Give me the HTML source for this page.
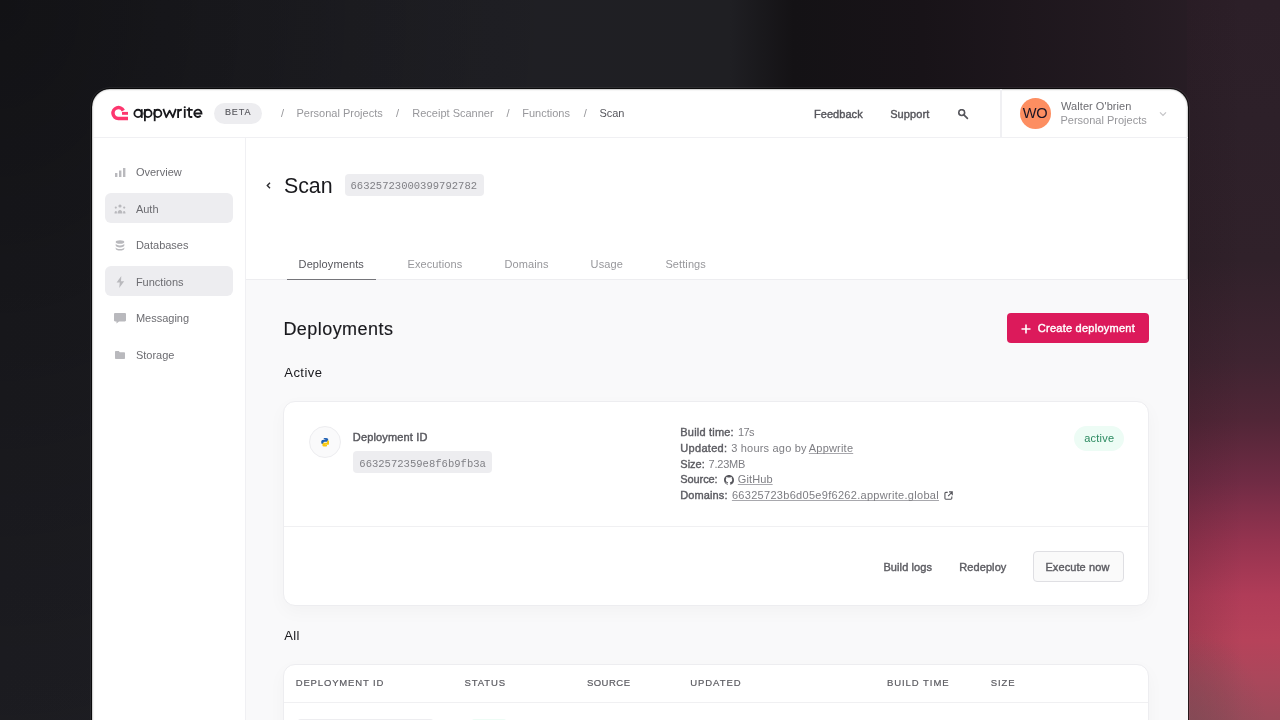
<!DOCTYPE html>
<html><head><meta charset="utf-8">
<style>
*{box-sizing:border-box;margin:0;padding:0}
html,body{width:1280px;height:720px;overflow:hidden}
body{font-family:"Liberation Sans",sans-serif;background:#1b1b1f;position:relative}
#bg{position:absolute;inset:0;background:
radial-gradient(ellipse 560px 760px at 0px 0px, rgba(0,0,0,.36) 0%, rgba(0,0,0,.12) 60%, rgba(0,0,0,0) 100%),
linear-gradient(90deg,#1c1c21 0%,#1f1f24 40%,#1f1f23 57%,#141215 62%,#181318 72%,#231a21 88%,#2d2029 100%)}
#rs{position:absolute;left:1187px;top:0;width:93px;height:720px;background:
radial-gradient(ellipse 80px 100px at 0px 730px, rgba(128,78,88,.7) 0%, rgba(128,78,88,0) 100%),
linear-gradient(90deg, rgba(20,10,15,.12) 0%, rgba(20,10,15,0) 60%),
linear-gradient(180deg,#2c1f28 0px,#2d2029 120px,#30212a 260px,#3f2431 360px,#512637 420px,#6f2b44 480px,#94334f 540px,#b03c58 595px,#b6425a 640px,#aa475b 680px,#9c4a5a 720px)}
.abs{position:absolute}
#win{position:absolute;left:91.4px;top:88px;width:1097.8px;height:700px;background:#fff;border-radius:19px;border:1.7px solid rgba(0,0,0,.72);background-clip:padding-box;box-shadow:0 0 0 1px rgba(255,255,255,.06),inset 0 0 1.5px 0.5px rgba(0,0,0,.35)}
#clip{position:absolute;left:0;top:0;width:1280px;height:720px;will-change:transform;clip-path:inset(89px 92px 0 93px round 18px 18px 0 0)}
.t{position:absolute;white-space:nowrap;line-height:1}
u{text-decoration:underline;text-underline-offset:1.5px;text-decoration-thickness:1px}
</style></head><body>
<div id="bg"></div><div id="rs"></div>
<div id="win"></div>
<div id="clip">
<div class="abs" style="left:93px;top:137.2px;width:1095px;height:1.2px;background:#f0f0f3"></div>
<svg class="abs" style="left:108px;top:102px" width="22" height="20" viewBox="0 0 22 20">
<path d="M15.3 8.6A5.45 5.45 0 1 0 10.3 16.5H20" fill="none" stroke="#fd366e" stroke-width="3.5"/>
<rect x="14" y="9.9" width="6" height="2.9" fill="#fd366e"/></svg>
<svg class="abs" style="left:131px;top:102px" width="74" height="22" viewBox="0 0 74 22" fill="none" stroke="#19191d" stroke-width="1.8">
<circle cx="7.0" cy="11.4" r="3.65"/><path d="M10.75 7.2V15.9"/>
<path d="M13.9 7.0V19.2"/><circle cx="16.95" cy="11.4" r="3.65"/>
<path d="M23.7 7.0V19.2"/><circle cx="26.75" cy="11.4" r="3.65"/>
<path d="M32.3 6.9L35.3 15.2 38.6 8.6 41.9 15.2 44.9 6.9" stroke-linejoin="round"/>
<path d="M47.1 15.9V7M47.1 10.8C47.1 8.6 48.6 7.75 50.9 7.75"/>
<path d="M53.75 7V15.9"/><circle cx="53.75" cy="5.3" r="1.05" fill="#19191d" stroke="none"/>
<path d="M58.1 5.6V13.6Q58.1 15.0 59.5 15.0H61.3M55.6 7.8H61.7"/>
<path d="M63.2 11.5H70.55A3.65 3.65 0 1 0 69.7 13.7"/>
</svg>
<div class="abs" style="left:214px;top:103px;width:48px;height:21px;background:#ededf0;border-radius:11px"></div>
<div class="t" style="left:225.00px;top:108.38px;font-size:9px;color:#56565c;font-weight:400;letter-spacing:0.85px;font-family:'Liberation Sans',sans-serif;-webkit-text-stroke:0.15px #56565c;">BETA</div>
<div class="t" style="left:281.00px;top:107.69px;font-size:11px;color:#97979b;font-weight:400;letter-spacing:0px;font-family:'Liberation Sans',sans-serif;">/</div>
<div class="t" style="left:296.50px;top:107.69px;font-size:11px;color:#97979b;font-weight:400;letter-spacing:0px;font-family:'Liberation Sans',sans-serif;">Personal Projects</div>
<div class="t" style="left:396.00px;top:107.69px;font-size:11px;color:#97979b;font-weight:400;letter-spacing:0px;font-family:'Liberation Sans',sans-serif;">/</div>
<div class="t" style="left:412.30px;top:107.69px;font-size:11px;color:#97979b;font-weight:400;letter-spacing:0px;font-family:'Liberation Sans',sans-serif;">Receipt Scanner</div>
<div class="t" style="left:506.50px;top:107.69px;font-size:11px;color:#97979b;font-weight:400;letter-spacing:0px;font-family:'Liberation Sans',sans-serif;">/</div>
<div class="t" style="left:522.20px;top:107.69px;font-size:11px;color:#97979b;font-weight:400;letter-spacing:0px;font-family:'Liberation Sans',sans-serif;">Functions</div>
<div class="t" style="left:583.70px;top:107.69px;font-size:11px;color:#97979b;font-weight:400;letter-spacing:0px;font-family:'Liberation Sans',sans-serif;">/</div>
<div class="t" style="left:599.40px;top:107.69px;font-size:11px;color:#56565c;font-weight:400;letter-spacing:0px;font-family:'Liberation Sans',sans-serif;">Scan</div>
<div class="t" style="left:814.00px;top:108.89px;font-size:11px;color:#56565c;font-weight:400;letter-spacing:0.05px;font-family:'Liberation Sans',sans-serif;-webkit-text-stroke:0.4px #56565c;">Feedback</div>
<div class="t" style="left:890.20px;top:108.89px;font-size:11px;color:#56565c;font-weight:400;letter-spacing:0.1px;font-family:'Liberation Sans',sans-serif;-webkit-text-stroke:0.4px #56565c;">Support</div>
<svg class="abs" style="left:957px;top:109px" width="13" height="12" viewBox="0 0 13 12">
<circle cx="4.7" cy="3.6" r="2.95" fill="none" stroke="#56565c" stroke-width="1.6"/>
<path d="M6.9 5.8L10.4 9.3" stroke="#56565c" stroke-width="1.7" stroke-linecap="round"/></svg>
<div class="abs" style="left:1000.4px;top:89px;width:1.2px;height:48px;background:#f0f0f3"></div>
<div class="abs" style="left:1020px;top:98px;width:31px;height:31px;background:#fd8e61;border-radius:50%"></div>
<div class="t" style="left:1022.80px;top:106.04px;font-size:14.6px;color:#1b1424;font-weight:400;letter-spacing:-0.3px;font-family:'Liberation Sans',sans-serif;">WO</div>
<div class="t" style="left:1061.10px;top:101.49px;font-size:11px;color:#6c6c71;font-weight:400;letter-spacing:0.05px;font-family:'Liberation Sans',sans-serif;">Walter O&#39;brien</div>
<div class="t" style="left:1060.50px;top:114.59px;font-size:11px;color:#97979b;font-weight:400;letter-spacing:0px;font-family:'Liberation Sans',sans-serif;">Personal Projects</div>
<svg class="abs" style="left:1159px;top:111px" width="8" height="6" viewBox="0 0 8 6">
<path d="M1 1.3l3 3 3-3" fill="none" stroke="#c3c3c6" stroke-width="1.2"/></svg>
<div class="abs" style="left:245px;top:138px;width:1.2px;height:600px;background:#f0f0f3"></div>
<div class="abs" style="left:105px;top:193px;width:127.5px;height:30px;background:#ededf0;border-radius:6px"></div>
<div class="abs" style="left:105px;top:266px;width:127.5px;height:30px;background:#ededf0;border-radius:6px"></div>
<div class="t" style="left:135.90px;top:167.29px;font-size:11px;color:#6c6c71;font-weight:400;letter-spacing:0px;font-family:'Liberation Sans',sans-serif;">Overview</div>
<div class="t" style="left:135.90px;top:203.59px;font-size:11px;color:#6c6c71;font-weight:400;letter-spacing:0px;font-family:'Liberation Sans',sans-serif;">Auth</div>
<div class="t" style="left:135.90px;top:240.39px;font-size:11px;color:#6c6c71;font-weight:400;letter-spacing:0px;font-family:'Liberation Sans',sans-serif;">Databases</div>
<div class="t" style="left:135.90px;top:276.89px;font-size:11px;color:#6c6c71;font-weight:400;letter-spacing:0px;font-family:'Liberation Sans',sans-serif;">Functions</div>
<div class="t" style="left:135.90px;top:313.29px;font-size:11px;color:#6c6c71;font-weight:400;letter-spacing:0px;font-family:'Liberation Sans',sans-serif;">Messaging</div>
<div class="t" style="left:135.90px;top:349.89px;font-size:11px;color:#6c6c71;font-weight:400;letter-spacing:0px;font-family:'Liberation Sans',sans-serif;">Storage</div>
<svg class="abs" style="left:115px;top:167px" width="11" height="10" viewBox="0 0 11 10"><rect x="0" y="6" width="2.4" height="4" fill="#b9b9bd"/><rect x="4" y="3.5" width="2.4" height="6.5" fill="#b9b9bd"/><rect x="8" y="1" width="2.4" height="9" fill="#b9b9bd"/></svg>
<svg class="abs" style="left:114px;top:204px" width="12" height="10" viewBox="0 0 12 10"><circle cx="6" cy="2" r="1.6" fill="#b9b9bd"/><circle cx="1.8" cy="3.6" r="1.1" fill="#b9b9bd"/><circle cx="10.2" cy="3.6" r="1.1" fill="#b9b9bd"/><path d="M3.6 9.5c0-2 1-3.4 2.4-3.4s2.4 1.4 2.4 3.4z" fill="#b9b9bd"/><path d="M0.5 9.5c0-1.6.5-2.6 1.3-2.6s1.1.6 1.1 1.2v1.4z" fill="#b9b9bd"/><path d="M11.5 9.5c0-1.6-.5-2.6-1.3-2.6s-1.1.6-1.1 1.2v1.4z" fill="#b9b9bd"/></svg>
<svg class="abs" style="left:115px;top:240px" width="10" height="11" viewBox="0 0 10 11"><ellipse cx="5" cy="2" rx="4.3" ry="1.8" fill="#b9b9bd"/><path d="M0.7 3.6c0 1 1.9 1.8 4.3 1.8s4.3-.8 4.3-1.8v2c0 1-1.9 1.8-4.3 1.8S.7 6.6.7 5.6z" fill="#b9b9bd"/><path d="M0.7 7.2c0 1 1.9 1.8 4.3 1.8s4.3-.8 4.3-1.8v1.6c0 1-1.9 1.8-4.3 1.8S.7 9.8.7 8.8z" fill="#b9b9bd"/></svg>
<svg class="abs" style="left:116px;top:276px" width="9" height="12" viewBox="0 0 9 12"><path d="M5.3 0L0.6 6.6h3.2L3.2 12 8.2 5.2H5z" fill="#b9b9bd"/></svg>
<svg class="abs" style="left:114px;top:313px" width="12" height="11" viewBox="0 0 12 11"><path d="M1.2 0h9.6C11.5 0 12 .5 12 1.2v6c0 .7-.5 1.2-1.2 1.2H5L2.5 10.6V8.4H1.2C.5 8.4 0 7.9 0 7.2v-6C0 .5.5 0 1.2 0z" fill="#b9b9bd"/></svg>
<svg class="abs" style="left:115px;top:351px" width="10" height="8" viewBox="0 0 10 8"><path d="M0.8 0h3l1 1.2h4.4c.5 0 .8.3.8.8v5.2c0 .5-.3.8-.8.8H.8C.3 8 0 7.7 0 7.2V.8C0 .3.3 0 .8 0z" fill="#b9b9bd"/></svg>
<svg class="abs" style="left:266px;top:182px" width="5" height="7" viewBox="0 0 5 7"><path d="M4 0.8L1.3 3.5 4 6.2" fill="none" stroke="#2d2d31" stroke-width="1.4"/></svg>
<div class="t" style="left:283.90px;top:175.68px;font-size:21.4px;color:#19191d;font-weight:400;letter-spacing:0px;font-family:'Liberation Sans',sans-serif;">Scan</div>
<div class="abs" style="left:344.5px;top:174px;width:139.5px;height:22px;background:#ededf0;border-radius:4px"></div>
<div class="t" style="left:350.50px;top:181.21px;font-size:10.55px;color:#818186;font-weight:400;letter-spacing:0px;font-family:'Liberation Mono',monospace;">66325723000399792782</div>
<div class="t" style="left:298.60px;top:258.69px;font-size:11px;color:#56565c;font-weight:400;letter-spacing:0.1px;font-family:'Liberation Sans',sans-serif;">Deployments</div>
<div class="t" style="left:407.50px;top:258.69px;font-size:11px;color:#97979b;font-weight:400;letter-spacing:0.1px;font-family:'Liberation Sans',sans-serif;">Executions</div>
<div class="t" style="left:504.50px;top:258.69px;font-size:11px;color:#97979b;font-weight:400;letter-spacing:0.1px;font-family:'Liberation Sans',sans-serif;">Domains</div>
<div class="t" style="left:590.60px;top:258.69px;font-size:11px;color:#97979b;font-weight:400;letter-spacing:0.1px;font-family:'Liberation Sans',sans-serif;">Usage</div>
<div class="t" style="left:665.40px;top:258.69px;font-size:11px;color:#97979b;font-weight:400;letter-spacing:0.1px;font-family:'Liberation Sans',sans-serif;">Settings</div>
<div class="abs" style="left:246px;top:280px;width:942px;height:460px;background:#f9f9fa"></div>
<div class="abs" style="left:246px;top:279px;width:942px;height:1px;background:#ededf0"></div>
<div class="abs" style="left:287px;top:278.7px;width:89px;height:1.5px;background:#75757a"></div>
<div class="t" style="left:283.40px;top:319.66px;font-size:18px;color:#19191d;font-weight:400;letter-spacing:0.45px;font-family:'Liberation Sans',sans-serif;-webkit-text-stroke:0.15px #19191d;">Deployments</div>
<div class="t" style="left:284.30px;top:365.80px;font-size:13px;color:#19191d;font-weight:400;letter-spacing:0.45px;font-family:'Liberation Sans',sans-serif;">Active</div>
<div class="abs" style="left:1007px;top:313px;width:142px;height:30px;background:#dc1a5b;border-radius:4px"></div>
<svg class="abs" style="left:1021px;top:324px" width="10" height="10" viewBox="0 0 10 10"><path d="M5 0.5v9M0.5 5h9" stroke="#fff" stroke-width="1.6"/></svg>
<div class="t" style="left:1037.80px;top:323.49px;font-size:11px;color:#ffffff;font-weight:400;letter-spacing:0.25px;font-family:'Liberation Sans',sans-serif;-webkit-text-stroke:0.4px #ffffff;">Create deployment</div>
<div class="abs" style="left:283px;top:401px;width:866px;height:205px;background:#fff;border:1px solid #ededf0;border-radius:12px;box-shadow:0 6px 18px rgba(0,0,0,.03)"></div>
<div class="abs" style="left:284px;top:526px;width:864px;height:1px;background:#f0f0f2"></div>
<div class="abs" style="left:308.5px;top:426px;width:32px;height:32px;background:#fafafb;border:1px solid #ededf0;border-radius:50%"></div>
<svg class="abs" style="left:320.5px;top:438px" width="8.6" height="8.6" viewBox="0 0 9 9">
<path d="M4.4 0C2.6 0 2.7.8 2.7.8v.9h1.8v.3H1.9S.2 1.8.2 4.1s1.4 2.3 1.4 2.3h.9V5.3s0-1.4 1.4-1.4h2.3s1.3 0 1.3-1.3V1.3S7.7 0 4.4 0z" fill="#2262b4"/>
<path d="M4.6 9c1.8 0 1.7-.8 1.7-.8v-.9H4.5V7h2.6s1.7.2 1.7-2.1-1.4-2.3-1.4-2.3h-.9v1.1s0 1.4-1.4 1.4H2.8s-1.3 0-1.3 1.3v1.3S1.3 9 4.6 9z" fill="#f8c810"/></svg>
<div class="t" style="left:352.80px;top:432.29px;font-size:11px;color:#56565c;font-weight:400;letter-spacing:0.15px;font-family:'Liberation Sans',sans-serif;-webkit-text-stroke:0.4px #56565c;">Deployment ID</div>
<div class="abs" style="left:353px;top:451px;width:139px;height:22px;background:#ededf0;border-radius:4px"></div>
<div class="t" style="left:359.30px;top:458.51px;font-size:10.55px;color:#818186;font-weight:400;letter-spacing:0px;font-family:'Liberation Mono',monospace;">6632572359e8f6b9fb3a</div>
<div class="t" style="left:680.30px;top:427.49px;font-size:11px;color:#5c5c62;font-weight:400;letter-spacing:0.2px;font-family:'Liberation Sans',sans-serif;-webkit-text-stroke:0.4px #5c5c62;">Build time:</div>
<div class="t" style="left:680.30px;top:443.19px;font-size:11px;color:#5c5c62;font-weight:400;letter-spacing:0.3px;font-family:'Liberation Sans',sans-serif;-webkit-text-stroke:0.4px #5c5c62;">Updated:</div>
<div class="t" style="left:680.30px;top:458.69px;font-size:11px;color:#5c5c62;font-weight:400;letter-spacing:0.0px;font-family:'Liberation Sans',sans-serif;-webkit-text-stroke:0.4px #5c5c62;">Size:</div>
<div class="t" style="left:680.30px;top:474.49px;font-size:11px;color:#5c5c62;font-weight:400;letter-spacing:-0.1px;font-family:'Liberation Sans',sans-serif;-webkit-text-stroke:0.4px #5c5c62;">Source:</div>
<div class="t" style="left:680.30px;top:489.69px;font-size:11px;color:#5c5c62;font-weight:400;letter-spacing:0.1px;font-family:'Liberation Sans',sans-serif;-webkit-text-stroke:0.4px #5c5c62;">Domains:</div>
<div class="t" style="left:738.00px;top:427.49px;font-size:11px;color:#7d7d82;font-weight:400;letter-spacing:-0.6px;font-family:'Liberation Sans',sans-serif;">17s</div>
<div class="t" style="left:731.20px;top:443.19px;font-size:11px;color:#7d7d82;font-weight:400;letter-spacing:0.2px;font-family:'Liberation Sans',sans-serif;">3 hours ago by</div>
<div class="t" style="left:808.80px;top:443.19px;font-size:11px;color:#7d7d82;font-weight:400;letter-spacing:0.2px;font-family:'Liberation Sans',sans-serif;text-decoration:underline;text-decoration-color:#a8a8ad;text-underline-offset:0.9px;text-decoration-skip-ink:none;text-decoration-thickness:1px;">Appwrite</div>
<div class="t" style="left:708.50px;top:458.69px;font-size:11px;color:#7d7d82;font-weight:400;letter-spacing:-0.2px;font-family:'Liberation Sans',sans-serif;">7.23MB</div>
<div class="t" style="left:737.80px;top:474.49px;font-size:11px;color:#7d7d82;font-weight:400;letter-spacing:0.1px;font-family:'Liberation Sans',sans-serif;text-decoration:underline;text-decoration-color:#a8a8ad;text-underline-offset:0.9px;text-decoration-skip-ink:none;text-decoration-thickness:1px;">GitHub</div>
<div class="t" style="left:731.90px;top:489.69px;font-size:11px;color:#7d7d82;font-weight:400;letter-spacing:0.3px;font-family:'Liberation Sans',sans-serif;text-decoration:underline;text-decoration-color:#a8a8ad;text-underline-offset:0.9px;text-decoration-skip-ink:none;text-decoration-thickness:1px;">66325723b6d05e9f6262.appwrite.global</div>
<svg class="abs" style="left:724px;top:475px" width="10" height="10" viewBox="0 0 16 16"><path fill="#56565c" d="M8 0C3.58 0 0 3.58 0 8c0 3.54 2.29 6.53 5.47 7.59.4.07.55-.17.55-.38 0-.19-.01-.82-.01-1.49-2.01.37-2.53-.49-2.69-.94-.09-.23-.48-.94-.82-1.13-.28-.15-.68-.52-.01-.53.63-.01 1.08.58 1.23.82.72 1.21 1.87.87 2.33.66.07-.52.28-.87.51-1.07-1.78-.2-3.64-.89-3.64-3.95 0-.87.31-1.590.82-2.15-.08-.2-.36-1.02.08-2.12 0 0 .67-.21 2.2.82.64-.18 1.32-.27 2-.27.68 0 1.36.09 2 .27 1.53-1.04 2.2-.82 2.2-.82.44 1.1.16 1.92.08 2.12.51.56.82 1.27.82 2.15 0 3.07-1.87 3.75-3.65 3.95.29.25.54.73.54 1.48 0 1.07-.01 1.93-.01 2.2 0 .21.15.46.55.38A8.013 8.013 0 0016 8c0-4.42-3.58-8-8-8z"/></svg>
<svg class="abs" style="left:944.3px;top:491.3px" width="9.2" height="9.2" viewBox="0 0 10 10"><path d="M4 1.5H2A1 1 0 0 0 1 2.5v5.5a1 1 0 0 0 1 1h5.5a1 1 0 0 0 1-1V6" fill="none" stroke="#56565c" stroke-width="1.2"/><path d="M5.5 1h3.5v3.5M9 1L4.5 5.5" fill="none" stroke="#56565c" stroke-width="1.2"/></svg>
<div class="abs" style="left:1074px;top:426px;width:50px;height:25px;background:#edfcf5;border-radius:13px"></div>
<div class="t" style="left:1084.30px;top:432.89px;font-size:11px;color:#2b8a60;font-weight:400;letter-spacing:0.2px;font-family:'Liberation Sans',sans-serif;">active</div>
<div class="t" style="left:883.40px;top:561.89px;font-size:11px;color:#5c5c62;font-weight:400;letter-spacing:0.1px;font-family:'Liberation Sans',sans-serif;-webkit-text-stroke:0.4px #5c5c62;">Build logs</div>
<div class="t" style="left:959.20px;top:561.89px;font-size:11px;color:#5c5c62;font-weight:400;letter-spacing:0.1px;font-family:'Liberation Sans',sans-serif;-webkit-text-stroke:0.4px #5c5c62;">Redeploy</div>
<div class="abs" style="left:1032.5px;top:551px;width:91.5px;height:30.5px;background:#fafafa;border:1px solid #dfdfe3;border-radius:4px"></div>
<div class="t" style="left:1045.40px;top:562.09px;font-size:11px;color:#5c5c62;font-weight:400;letter-spacing:0.1px;font-family:'Liberation Sans',sans-serif;-webkit-text-stroke:0.4px #5c5c62;">Execute now</div>
<div class="t" style="left:284.30px;top:629.00px;font-size:13px;color:#19191d;font-weight:400;letter-spacing:0.3px;font-family:'Liberation Sans',sans-serif;">All</div>
<div class="abs" style="left:283px;top:664px;width:866px;height:100px;background:#fff;border:1px solid #ededf0;border-radius:12px 12px 0 0;box-shadow:0 6px 18px rgba(0,0,0,.03)"></div>
<div class="abs" style="left:284px;top:702px;width:864px;height:1px;background:#f0f0f2"></div>
<div class="t" style="left:295.70px;top:678.36px;font-size:9.5px;color:#5c5c62;font-weight:400;letter-spacing:0.85px;font-family:'Liberation Sans',sans-serif;-webkit-text-stroke:0.2px #5c5c62;">DEPLOYMENT ID</div>
<div class="t" style="left:464.40px;top:678.36px;font-size:9.5px;color:#5c5c62;font-weight:400;letter-spacing:0.95px;font-family:'Liberation Sans',sans-serif;-webkit-text-stroke:0.2px #5c5c62;">STATUS</div>
<div class="t" style="left:586.90px;top:678.36px;font-size:9.5px;color:#5c5c62;font-weight:400;letter-spacing:0.5px;font-family:'Liberation Sans',sans-serif;-webkit-text-stroke:0.2px #5c5c62;">SOURCE</div>
<div class="t" style="left:690.20px;top:678.36px;font-size:9.5px;color:#5c5c62;font-weight:400;letter-spacing:0.95px;font-family:'Liberation Sans',sans-serif;-webkit-text-stroke:0.2px #5c5c62;">UPDATED</div>
<div class="t" style="left:886.90px;top:678.36px;font-size:9.5px;color:#5c5c62;font-weight:400;letter-spacing:0.95px;font-family:'Liberation Sans',sans-serif;-webkit-text-stroke:0.2px #5c5c62;">BUILD TIME</div>
<div class="t" style="left:990.80px;top:678.36px;font-size:9.5px;color:#5c5c62;font-weight:400;letter-spacing:0.85px;font-family:'Liberation Sans',sans-serif;-webkit-text-stroke:0.2px #5c5c62;">SIZE</div>
<div class="abs" style="left:297px;top:719px;width:137px;height:10px;background:#ededf0;border-radius:4px"></div>
<div class="abs" style="left:470px;top:719px;width:38px;height:10px;background:#edfcf5;border-radius:10px"></div>
</div>
</body></html>
